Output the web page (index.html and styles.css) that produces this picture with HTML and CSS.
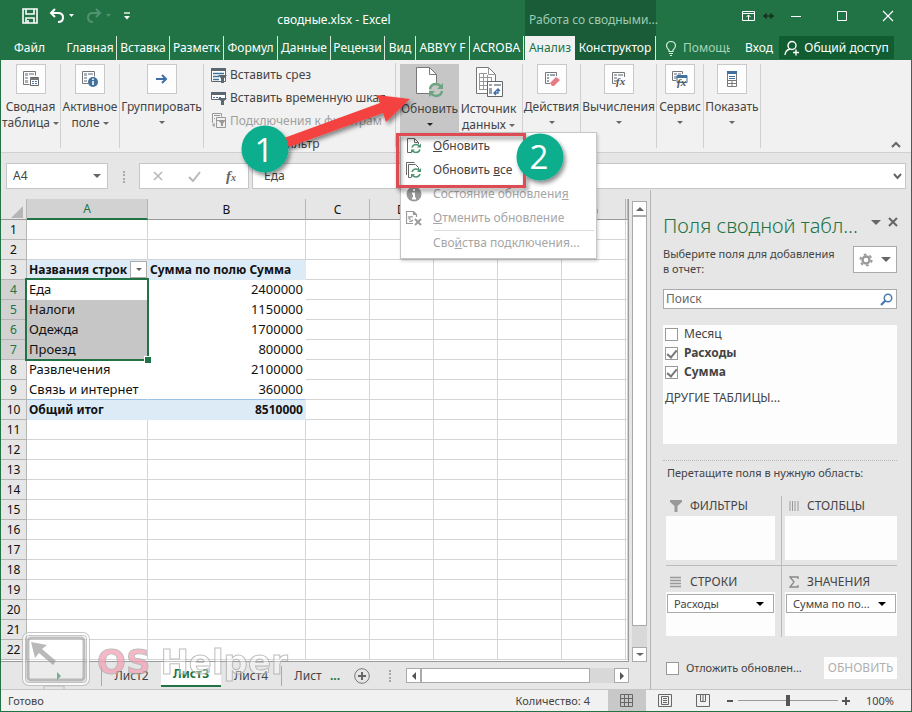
FILE: index.html
```html
<!DOCTYPE html>
<html lang="ru">
<head>
<meta charset="utf-8">
<title>сводные.xlsx - Excel</title>
<link rel="stylesheet" href="styles.css">
</head>
<body>
<div class="app">
  <header class="titlebar">
    <div class="quick">
      <button aria-label="Сохранить"><svg width="16" height="16" viewBox="0 0 16 16"><path d="M1 1h14v14H1zM4 1v5h8V1M4 15v-5h8v5M6 15v-3" fill="none" stroke="#fff" stroke-width="1.6"/></svg></button>
      <button aria-label="Отменить"><svg width="26" height="16" viewBox="0 0 26 16"><path d="M6 1L2 5l4 4M2 5h7q5 0 5 4.500t-5 4.500" fill="none" stroke="#fff" stroke-width="2"/><path d="M20 6h5l-2.500 3z" fill="#fff"/></svg></button>
      <button aria-label="Вернуть"><svg width="26" height="16" viewBox="0 0 26 16"><path d="M10 1l4 4-4 4M14 5H7q-5 0-5 4.500T7 14" fill="none" stroke="#4f9370" stroke-width="2"/><path d="M20 6h5l-2.500 3z" fill="#4f9370"/></svg></button>
      <button aria-label="Настройка панели"><svg width="8" height="10" viewBox="0 0 8 10"><path d="M1 2h6" stroke="#fff" stroke-width="1.300"/><path d="M1 5h6L4 8.500z" fill="#fff"/></svg></button>
    </div>
    <h1 class="doc">сводные.xlsx - Excel</h1>
    <div class="context">Работа со сводными...</div>
    <div class="window">
      <button aria-label="Параметры ленты"><svg width="32" height="12" viewBox="0 0 32 12"><path d="M.5 1.500h12v9H.5zM.5 3.500h12M6.500 10V5M4.500 7l2-2 2 2" fill="none" stroke="#fff"/><path d="M22 6h9M25 3.500L22 6l3 2.500M28 3.500L31 6l-3 2.500" fill="none" stroke="#16301f" stroke-width="1.500"/></svg></button>
      <button aria-label="Свернуть"><svg width="12" height="12"><path d="M1 6.500h10" stroke="#fff"/></svg></button>
      <button aria-label="Развернуть"><svg width="12" height="12"><path d="M1.500 1.500h9v9h-9z" fill="none" stroke="#fff"/></svg></button>
      <button aria-label="Закрыть"><svg width="12" height="12"><path d="M1 1l10 10M11 1L1 11" stroke="#fff" stroke-width="1.200"/></svg></button>
    </div>
  </header>

  <nav class="tabs">
    <div class="main-tabs">
      <button class="file">Файл</button>
      <button class="w53">Главная</button>
      <button class="w53">Вставка</button>
      <button class="w54">Разметк</button>
      <button class="w54">Формул</button>
      <button class="w53">Данные</button>
      <button class="w54">Рецензи</button>
      <button class="w31">Вид</button>
      <button class="w54">ABBYY F</button>
      <button class="w54">ACROBA</button>
    </div>
    <div class="context-tabs">
      <button class="active">Анализ</button>
      <button class="design">Конструктор</button>
    </div>
    <div class="right-tabs">
      <button class="help"><svg width="12" height="16" viewBox="0 0 12 16"><path d="M4 11.500V10Q1.500 8 1.500 5.500 2 1.500 6 1.500t4.500 4Q10.500 8 8 10v1.500zM4 13.500h4M5 15.500h2" fill="none" stroke="#d5f0dc" stroke-width="1.200"/></svg><span>Помощь</span></button>
      <button class="login">Вход</button>
      <button class="share"><svg width="16" height="16" viewBox="0 0 16 16"><circle cx="8" cy="5.500" r="4" fill="none" stroke="#fff" stroke-width="1.400"/><path d="M1 15q.5-5 5-6M12 9.500v6M9 12.500h6" fill="none" stroke="#fff" stroke-width="1.400"/></svg>Общий доступ</button>
    </div>
  </nav>

  <section class="ribbon">
    <div class="group g60"><button class="cmd"><span class="box"><svg width="18" height="18" viewBox="0 0 18 18"><path d="M1.500 14.500v-13h12v4M1.500 14.500h6" fill="none" stroke="#777"/><path d="M3 3h3v3H3zM7 3h5v2H7zM3 7h3v2H3zM3 10h3v3H3z" fill="#aab1ba"/><path d="M8.500 7.500h8v8h-8z" fill="#fff" stroke="#666"/><path d="M8 8h9v2H8z" fill="#777"/><path d="M10 11.500h2M13 11.500h2M10 13.500h2M13 13.500h2" stroke="#4a7ab0"/></svg></span><span>Сводная</span><span>таблица<i class="tri"></i></span></button></div>
    <div class="group g59"><button class="cmd"><span class="box"><svg width="18" height="18" viewBox="0 0 18 18"><path d="M1.500 13.500v-12h12v5M1.500 13.500h6" fill="none" stroke="#777"/><path d="M3 3h3v3H3zM7 3h5v2H7zM3 7h3v2H3zM3 10h3v2H3z" fill="#aab1ba"/><circle cx="12" cy="12" r="5" fill="#41719c"/><path d="M12 8.500v1.500M12 11v4" stroke="#fff" stroke-width="1.600"/></svg></span><span>Активное</span><span>поле<i class="tri"></i></span></button></div>
    <div class="group g84"><button class="cmd"><span class="box"><svg width="12" height="12" viewBox="0 0 12 12"><path d="M0 6h10M6 2l4 4-4 4" fill="none" stroke="#3d6ea8" stroke-width="2"/></svg></span><span>Группировать</span><i class="tri low"></i></button></div>
    <div class="group filter">
      <button class="line"><svg width="16" height="16" viewBox="0 0 16 16"><path d="M.5 1.500h14v13H.5z" fill="#fff" stroke="#5d6770"/><path d="M0 1h15v3H0z" fill="#5d6770"/><path d="M2 6.500h11M2 9.500h6M2 12.500h6" stroke="#41719c" stroke-width="1.300"/><path d="M7 8h9l-3 3.500V16h-3v-4.500z" fill="#5d6770"/></svg>Вставить срез</button>
      <button class="line"><svg width="16" height="16" viewBox="0 0 16 16"><path d="M.5 3.500h14v6H.5z" fill="#fff" stroke="#5d6770"/><path d="M0 2h15v3H0z" fill="#5d6770"/><path d="M2 7.500h9" stroke="#41719c" stroke-dasharray="2 1"/><path d="M7 8h9l-3 3v4h-3v-4z" fill="#5d6770"/></svg>Вставить временную шкал</button>
      <button class="line" disabled><svg width="16" height="16" viewBox="0 0 16 16"><path d="M1.500 10V.5h9v3M5.500 4.500h9v10h-9zM5.500 7.500h9M1 12h3M3 14v-4M3 2.500h6M3 5.500h1" fill="none" stroke="#999"/><path d="M8 8h6l-2 2.500V13h-2v-2.500z" fill="#999"/></svg>Подключения к фильтрам</button>
      <div class="caption">Фильтр</div>
    </div>
    <div class="group data">
      <div class="menu-host">
        <button class="big pressed"><svg width="28" height="32" viewBox="0 0 28 32"><path d="M.5 1.500h13l7 7v19H.5z" fill="#fff" stroke="#777"/><path d="M13.500 1.500v7h7" fill="none" stroke="#777"/><circle cx="20" cy="24" r="7" fill="#c6c6c6"/><path d="M14 23q1-5 6-5 3 0 5 2.500M26 25q-1 5-6 5-3 0-5-2.500" fill="none" stroke="#6ba581" stroke-width="2.400"/><path d="M27 17v6h-6zM13 31v-6h6z" fill="#6ba581"/></svg><span>Обновить</span><i class="tri low dark"></i></button>
        <div class="menu" role="menu">
          <button role="menuitem"><svg width="16" height="16" viewBox="0 0 16 16"><path d="M5 14.500H1.500V.5h7l4 4V6M8.500.5v4h4" fill="none" stroke="#666"/><path d="M6 9.500q1-3 4-3 2 0 4 2M14 11.500q-1 3-4 3-2 0-4-2" fill="none" stroke="#4c9570" stroke-width="1.500"/><path d="M15 5.500v4h-4zM5 15.500v-4h4z" fill="#4c9570"/></svg><span><u>О</u>бновить</span></button>
          <button role="menuitem"><svg width="16" height="16" viewBox="0 0 16 16"><path d="M.5 13V.5h8M5 15.500H2.500v-13h7l3 3V7" fill="none" stroke="#666"/><path d="M6 10q1-3 4-3 2 0 4 2M14 12q-1 3-4 3-2 0-4-2" fill="none" stroke="#4c9570" stroke-width="1.500"/><path d="M15 6v4h-4zM5 16v-4h4z" fill="#4c9570"/></svg><span>Обновить <u>в</u>се</span></button>
          <button role="menuitem" disabled><svg width="16" height="16" viewBox="0 0 16 16"><circle cx="8" cy="8" r="7.500" fill="#999"/><path d="M8 3v2M6 7.500h2V12M6 12.500h4" stroke="#fff" stroke-width="2" fill="none"/></svg><span>Состояние обновлени<u>я</u></span></button>
          <button role="menuitem" disabled><svg width="16" height="16" viewBox="0 0 16 16"><path d="M7 13.500H.5V1.500h7l3 3V7M7.500 1.500v3h3M3 8q1-2 4-1M3 6v3h2M3 11q2 1 4-1" fill="none" stroke="#999" stroke-width="1.200"/><path d="M9 9l6 6M15 9l-6 6" stroke="#999" stroke-width="1.800"/></svg><span><u>О</u>тменить обновление</span></button>
          <hr>
          <button role="menuitem" disabled><i class="noicon"></i><span>Сво<u>й</u>ства подключения...</span></button>
        </div>
      </div>
      <button class="big"><svg width="28" height="32" viewBox="0 0 28 32"><path d="M1.500 1.500h12l7 7v19h-19z" fill="#fff" stroke="#777"/><path d="M13.500 1.500v7h7M4 7.500h8M4 11.500h13M4 15.500h13M4 19.500h9M4 23.500h8M4.500 7v17M8.500 7v17M12.500 9v10M16.500 11v5" fill="none" stroke="#999"/><path d="M12.500 15.500h15v15h-15z" fill="#fff" stroke="#666"/><path d="M14 18h3v2h-3zM19 18h7v2h-7zM14 22h3v6h-3z" fill="#9aa3ad"/><path d="M19 27h4v-4M21 25l-2 2 2 2M21 25l2-2 2 2" fill="none" stroke="#3d6ea8" stroke-width="1.400"/></svg><span>Источник</span><span>данных<i class="tri"></i></span></button>
    </div>
    <div class="group g58"><button class="cmd"><span class="box"><svg width="16" height="18" viewBox="0 0 16 18"><path d="M12.500 6V2.500H1.500v11H6" fill="none" stroke="#777"/><path d="M3 4h2v2H3zM6 4h5v2H6zM3 7h2v2H3zM3 10h2v2H3z" fill="#9aa3ad"/><path d="M6 13l6-6 4 3-6 6H8z" fill="#e57b85"/></svg></span><span>Действия</span><i class="tri low"></i></button></div>
    <div class="group g76"><button class="cmd"><span class="box"><svg width="16" height="18" viewBox="0 0 16 18"><path d="M13.500 7V2.500H1.500v11H5" fill="none" stroke="#777"/><path d="M3 4h3v2H3zM7 4h5v2H7zM3 7h3v2H3zM3 10h3v2H3z" fill="#aab1ba"/><text x="5" y="15" class="fx">fx</text></svg></span><span>Вычисления</span><i class="tri low"></i></button></div>
    <div class="group g47"><button class="cmd"><span class="box"><svg width="18" height="18" viewBox="0 0 18 18"><path d="M11.500 4V1.500H1.500v9H5" fill="none" stroke="#777"/><path d="M3 3h3v2H3zM7 3h3v2H7zM3 6h3v3H3z" fill="#aab1ba"/><path d="M6 5.500h10v7H6z" fill="#fff" stroke="#41719c"/><path d="M6 5h10v3H6z" fill="#41719c"/><text x="6" y="16" class="fx">fx</text></svg></span><span>Сервис</span><i class="tri low"></i></button></div>
    <div class="group g57"><button class="cmd"><span class="box"><svg width="10" height="16" viewBox="0 0 10 16"><path d="M.5 1.500h9v14h-9z" fill="#fff" stroke="#777"/><path d="M0 0h10v3H0z" fill="#41719c"/><path d="M2 5.500h6M2 7.500h6" stroke="#41719c"/><path d="M0 9.500h10M0 12.500h10M5 9v6" stroke="#777"/></svg></span><span>Показать</span><i class="tri low"></i></button></div>
    <button class="collapse" aria-label="Свернуть ленту"><svg width="10" height="7"><path d="M1 6l4-4 4 4" fill="none" stroke="#666" stroke-width="2"/></svg></button>
  </section>

  <section class="formula">
    <div class="namebox"><input aria-label="Имя" value="A4"><i class="tri"></i></div>
    <span class="grip"></span>
    <div class="fbtns">
      <button aria-label="Отмена"><svg width="10" height="10"><path d="M1 1l8 8M9 1L1 9" stroke="#b8b8b8" stroke-width="1.600"/></svg></button>
      <button aria-label="Ввод"><svg width="13" height="11"><path d="M1 6l4 4 7-9" fill="none" stroke="#b8b8b8" stroke-width="2"/></svg></button>
      <button class="fxb" aria-label="Вставить функцию">f<small>x</small></button>
    </div>
    <div class="fvalue"><input aria-label="Строка формул" value="Еда"><svg width="9" height="7"><path d="M1 1l3.500 4L8 1" fill="none" stroke="#666" stroke-width="2"/></svg></div>
  </section>

  <main class="work">
    <section class="book">
      <div class="sheet">
        <div class="gridwrap">
        <table class="cells">
          <colgroup><col class="c0"><col class="ca"><col class="cb"><col class="cc"><col class="cc"><col class="cc"><col class="cc"><col class="cc"><col></colgroup>
          <thead><tr><th class="corner"><svg width="12" height="12"><path d="M12 0v12H0z" fill="#b5b5b5"/></svg></th><th class="sel">A</th><th>B</th><th>C</th><th>D</th><th>E</th><th>F</th><th>G</th><th></th></tr></thead>
          <tbody>
          <tr><th>1</th><td></td><td></td><td></td><td></td><td></td><td></td><td></td><td></td></tr>
          <tr><th>2</th><td></td><td></td><td></td><td></td><td></td><td></td><td></td><td></td></tr>
          <tr class="band"><th>3</th><td><div class="fieldhead">Названия строк<button aria-label="Фильтр строк"><i class="tri"></i></button></div></td><td class="left">Сумма по полю Сумма</td><td></td><td></td><td></td><td></td><td></td><td></td></tr>
          <tr class="pv picked"><th>4</th><td class="first"><div class="range"></div>Еда</td><td>2400000</td><td></td><td></td><td></td><td></td><td></td><td></td></tr>
          <tr class="pv picked"><th>5</th><td>Налоги</td><td>1150000</td><td></td><td></td><td></td><td></td><td></td><td></td></tr>
          <tr class="pv picked"><th>6</th><td>Одежда</td><td>1700000</td><td></td><td></td><td></td><td></td><td></td><td></td></tr>
          <tr class="pv picked"><th>7</th><td>Проезд</td><td>800000</td><td></td><td></td><td></td><td></td><td></td><td></td></tr>
          <tr class="pv"><th>8</th><td>Развлечения</td><td>2100000</td><td></td><td></td><td></td><td></td><td></td><td></td></tr>
          <tr class="pv last"><th>9</th><td>Связь и интернет</td><td>360000</td><td></td><td></td><td></td><td></td><td></td><td></td></tr>
          <tr class="band"><th>10</th><td>Общий итог</td><td>8510000</td><td></td><td></td><td></td><td></td><td></td><td></td></tr>
          <tr><th>11</th><td></td><td></td><td></td><td></td><td></td><td></td><td></td><td></td></tr>
          <tr><th>12</th><td></td><td></td><td></td><td></td><td></td><td></td><td></td><td></td></tr>
          <tr><th>13</th><td></td><td></td><td></td><td></td><td></td><td></td><td></td><td></td></tr>
          <tr><th>14</th><td></td><td></td><td></td><td></td><td></td><td></td><td></td><td></td></tr>
          <tr><th>15</th><td></td><td></td><td></td><td></td><td></td><td></td><td></td><td></td></tr>
          <tr><th>16</th><td></td><td></td><td></td><td></td><td></td><td></td><td></td><td></td></tr>
          <tr><th>17</th><td></td><td></td><td></td><td></td><td></td><td></td><td></td><td></td></tr>
          <tr><th>18</th><td></td><td></td><td></td><td></td><td></td><td></td><td></td><td></td></tr>
          <tr><th>19</th><td></td><td></td><td></td><td></td><td></td><td></td><td></td><td></td></tr>
          <tr><th>20</th><td></td><td></td><td></td><td></td><td></td><td></td><td></td><td></td></tr>
          <tr><th>21</th><td></td><td></td><td></td><td></td><td></td><td></td><td></td><td></td></tr>
          <tr><th>22</th><td></td><td></td><td></td><td></td><td></td><td></td><td></td><td></td></tr>
          </tbody>
        </table>
        </div>
        <div class="vscroll"><button aria-label="Вверх"><i class="tri up"></i></button><span class="vthumb"></span><span class="vtrack"></span><button aria-label="Вниз"><i class="tri"></i></button></div>
      </div>
      <div class="sheettabs">
        <span class="navs"><svg width="5" height="8"><path d="M0 0v8l4-4z" fill="#4c9570"/></svg></span>
        <button class="st">Лист2</button>
        <button class="st on">Лист3</button>
        <button class="st">Лист4</button>
        <button class="st cut">Лист</button>
        <b class="more">...</b>
        <button class="add" aria-label="Новый лист"><svg width="16" height="16"><circle cx="8" cy="8" r="7.300" fill="none" stroke="#777"/><path d="M8 4v8M4 8h8" stroke="#666" stroke-width="2"/></svg></button>
        <span class="grip"></span>
        <div class="hscroll"><button aria-label="Влево"><i class="tri lt"></i></button><span class="hthumb"></span><span class="htrack"></span><button aria-label="Вправо"><i class="tri rt"></i></button></div>
      </div>
      <div class="mark" aria-hidden="true">
        <svg width="68" height="60" viewBox="0 0 68 60"><g fill="none"><rect x="2" y="2" width="64" height="50" rx="5" fill="#fff" fill-opacity=".3" stroke="#b5b5b5" stroke-width="4"/><rect x="2" y="2" width="64" height="50" rx="5" stroke="#fff" stroke-width="2"/><rect x="6" y="6" width="56" height="42" rx="3" stroke="#aaa" stroke-width="3"/><path d="M22 57v-3h20v3" stroke="#aaa"/></g><path d="M9 10l16 3-5 4 14 12-3 4-14-12-4 5z" fill="#a2a2a2"/></svg>
        <span class="os">OS</span><span class="helper">Helper</span>
      </div>
    </section>

    <aside class="pane">
      <div class="panehead"><h2>Поля сводной табл...</h2><i class="tri large"></i><button aria-label="Закрыть область"><svg width="12" height="12"><path d="M2 2l8 8M10 2l-8 8" stroke="#666" stroke-width="2"/></svg></button></div>
      <div class="hint"><p>Выберите поля для добавления в отчет:</p><button class="gear" aria-label="Сервис"><svg width="14" height="14" viewBox="0 0 14 14"><circle cx="7" cy="7" r="3.500" fill="none" stroke="#999" stroke-width="2.400"/><circle cx="7" cy="7" r="5.600" fill="none" stroke="#999" stroke-width="2" stroke-dasharray="2.600 3.260"/></svg><i class="tri large"></i></button></div>
      <div class="search"><input type="text" placeholder="Поиск" aria-label="Поиск"><svg width="13" height="13" viewBox="0 0 13 13"><circle cx="8" cy="5" r="3.700" fill="none" stroke="#4a7ab0" stroke-width="1.500"/><path d="M5.500 7.500L1 12" stroke="#4a7ab0" stroke-width="2.300"/></svg></div>
      <div class="fields">
        <label><input type="checkbox">Месяц</label>
        <label class="bold"><input type="checkbox" checked>Расходы</label>
        <label class="bold"><input type="checkbox" checked>Сумма</label>
        <a href="#">ДРУГИЕ ТАБЛИЦЫ...</a>
      </div>
      <p class="drag">Перетащите поля в нужную область:</p>
      <div class="areas">
        <div class="area"><h3><svg width="12" height="12"><path d="M0 0h12v2L7.500 6v6h-3V6L0 2z" fill="#999"/></svg>ФИЛЬТРЫ</h3><div class="drop"></div></div>
        <div class="area r"><h3><svg width="10" height="12"><path d="M1 1v10M3.500 1v10M6 1v10M9 1v10" stroke="#999"/></svg>СТОЛБЦЫ</h3><div class="drop"></div></div>
        <div class="area b"><h3><svg width="12" height="12"><path d="M0 1.500h11M0 4.500h11M0 7.500h11M0 10.500h11" stroke="#999" stroke-width="1.500"/></svg>СТРОКИ</h3><div class="drop"><div class="chip"><select aria-label="Строки"><option>Расходы</option></select><i class="tri"></i></div></div></div>
        <div class="area r b"><h3><svg width="10" height="12"><path d="M9 3V1H1l4 5-4 5h8V9" fill="none" stroke="#888" stroke-width="1.300"/></svg>ЗНАЧЕНИЯ</h3><div class="drop"><div class="chip"><select aria-label="Значения"><option>Сумма по по...</option></select><i class="tri"></i></div></div></div>
      </div>
      <div class="defer"><label><input type="checkbox">Отложить обновлен...</label><button disabled>ОБНОВИТЬ</button></div>
    </aside>
  </main>

  <footer class="status">
    <span class="ready">Готово</span>
    <span class="count">Количество: 4</span>
    <button class="view on" aria-label="Обычный"><svg width="13" height="13"><path d="M.5.5h12v12H.5zM.5 4.500h12M.5 8.500h12M4.500.5v12M8.500.5v12" fill="none" stroke="#666"/></svg></button>
    <button class="view" aria-label="Разметка страницы"><svg width="14" height="13"><path d="M.5.5h13v12H.5zM3.500 2.500h7v8h-7zM5 4.500h4M5 6.500h4M5 8.500h4" fill="none" stroke="#666"/></svg></button>
    <button class="view" aria-label="Страничный"><svg width="14" height="13"><path d="M.5.5h13v12H.5zM4.500.5v7h5v-7M7 .5v7" fill="none" stroke="#666"/></svg></button>
    <button class="zoomb" aria-label="Уменьшить"><svg width="8" height="8"><path d="M1 4h6" stroke="#555" stroke-width="2"/></svg></button>
    <input class="zoom" type="range" min="0" max="100" value="50" aria-label="Масштаб">
    <button class="zoomb" aria-label="Увеличить"><svg width="8" height="8"><path d="M0 4h8M4 0v8" stroke="#555" stroke-width="2"/></svg></button>
    <span class="pct">100%</span>
  </footer>

  <svg class="notes" width="600" height="210" viewBox="0 0 600 210" aria-hidden="true">
    <defs><filter id="sh" x="-20%" y="-20%" width="150%" height="150%"><feDropShadow dx="2" dy="3" stdDeviation="2" flood-opacity=".45"/></filter></defs>
    <g filter="url(#sh)">
      <path d="M284 138L380 103 377 95l33 4-24 23-3-9-94 34z" fill="#f4433f"/>
      <rect x="397.500" y="134.500" width="127" height="52" fill="none" stroke="#dd4b53" stroke-width="3"/>
      <circle cx="265" cy="149" r="23.500" fill="#0fae8e"/>
      <circle cx="540" cy="157" r="23.500" fill="#0fae8e"/>
    </g>
    <text x="264" y="162">1</text><text x="539" y="169">2</text>
  </svg>
</div>
</body>
</html>
```
FILE: styles.css
```css
* { box-sizing: border-box; }
body { margin: 0; font: 12px/16px "Noto Sans", "Open Sans", sans-serif; color: #444; background: #e6e6e6; }
button, input, select { font: inherit; color: inherit; margin: 0; padding: 0; border: 0; background: none; border-radius: 0; }
button { white-space: nowrap; }
h1, h2, h3, p { margin: 0; font: inherit; }
svg { display: block; flex: none; }

.app { position: relative; display: flex; flex-direction: column; min-height: 100vh; border: solid #217346; border-width: 0 1px 1px; overflow: hidden; }

.tri { display: inline-block; flex: none; border: solid transparent; border-width: 3px 3px 0; border-top-color: #666; margin-left: 3px; vertical-align: middle; }
.tri.large { border-width: 5px 5px 0; margin: 0; }
.tri.low { margin: 6px 0 0; }
.tri.dark { border-top-color: #222; }
.tri.up { border-width: 0 4px 4px; border-color: transparent transparent #666; margin: 0; }
.tri.lt { border-width: 4px 4px 4px 0; border-color: transparent #555; margin: 0; }
.tri.rt { border-width: 4px 0 4px 4px; border-color: transparent #555; margin: 0; }

.titlebar { display: flex; height: 36px; background: #217346; color: #fff; }
.quick { display: flex; align-items: center; gap: 11px; width: 140px; padding: 0 0 4px 21px; }
.doc { flex: 1; text-align: center; padding: 12px 0 0 2px; }
.context { width: 131px; background: #1a5c38; color: #9fcbb0; padding: 12px 0 0 4px; white-space: nowrap; }
.window { display: flex; align-items: center; justify-content: flex-end; gap: 34px; width: 255px; padding: 0 17px 4px 0; }
.window button:first-child { margin-right: -18px; }

.tabs { display: flex; height: 24px; background: #217346; color: #fff; }
.main-tabs { display: flex; flex: 1; min-width: 0; }
.tabs button { overflow: hidden; }
.main-tabs button { flex: none; border-right: 1px solid #d9e8df; text-align: center; }
.main-tabs .file { width: 63px; border: 0; padding-right: 6px; }
.main-tabs .w53 { width: 53px; }
.main-tabs .w54 { width: 54px; }
.main-tabs .w31 { width: 31px; }
.context-tabs { display: flex; width: 131px; background: #1a5c38; border-right: 1px solid #d9e8df; }
.context-tabs .active { width: 50px; background: #f1f1f1; color: #217346; }
.context-tabs .design { flex: 1; }
.right-tabs { display: flex; width: 255px; }
.help { display: flex; align-items: center; gap: 6px; width: 74px; margin-left: 9px; color: #a9d3b8; }
.help span { width: 47px; overflow: hidden; }
.login { width: 40px; }
.share { display: flex; align-items: center; justify-content: center; gap: 4px; width: 115px; height: 23px; background: #115c30; }

.ribbon { display: flex; height: 93px; padding-top: 4px; background: #f1f1f1; border-bottom: 1px solid #d0d0d0; }
.group { height: 84px; border-right: 1px solid #d0d0d0; }
.g60 { width: 60px; } .g59 { width: 59px; } .g84 { width: 84px; } .g58 { width: 58px; }
.g76 { width: 76px; } .g47 { width: 47px; } .g57 { width: 57px; }
.cmd { display: flex; flex-direction: column; align-items: center; width: 100%; }
.box { display: grid; place-items: center; width: 30px; height: 30px; margin-bottom: 5px; background: #fdfdfd; border: 1px solid #c9c9c9; }
.fx { font: italic bold 11px "Liberation Serif", serif; fill: #555; }
.filter { width: 192px; padding-left: 7px; margin-top: -1px; padding-top: 0; }
.line { display: flex; align-items: center; gap: 3px; width: 176px; height: 23px; overflow: hidden; }
.line:disabled { color: #a0a0a0; }
.caption { text-align: center; padding: 4px 10px 0 0; }
.data { display: flex; width: 127px; padding-left: 4px; }
.menu-host { position: relative; width: 59px; }
.big { display: flex; flex-direction: column; align-items: center; width: 59px; height: 69px; padding-top: 2px; }
.big svg { margin-bottom: 3px; }
.big.pressed { width: 59px; background: #c6c6c6; }
.menu { position: absolute; z-index: 2; left: 0; top: 68px; width: 197px; padding: 1px 0 3px; background: #fff; border: 1px solid #c6c6c6; box-shadow: 1px 2px 3px #0003; }
.menu button { display: flex; align-items: center; gap: 11px; width: 100%; height: 24px; padding-left: 5px; }
.menu button:disabled { color: #a6a6a6; }
.menu hr { margin: 0 2px 0 33px; border: 0; border-top: 1px solid #dcdcdc; }
.noicon { width: 16px; }
.collapse { margin: auto 10px 4px auto; }

.formula { display: flex; height: 37px; padding: 10px 5px 0; }
.formula > * { height: 26px; background: #fff; border: 1px solid #c6c6c6; }
.namebox { display: flex; align-items: center; width: 102px; padding: 0 6px; }
.namebox input { flex: 1; min-width: 0; }
.namebox .tri { border-width: 4px 4px 0; }
.formula .grip { background: none; border: 0; margin: 0 14px 0 15px; display: flex; }
.grip { width: 2px; height: 12px; align-self: center; border-left: 2px dotted #aaa; }
.formula .grip::before { content: ""; height: 12px; margin: auto; border-left: 2px dotted #aaa; }
.fbtns { display: flex; align-items: center; justify-content: space-between; width: 110px; padding: 0 12px 0 13px; }
.fxb { font: italic bold 15px "Liberation Serif", serif; color: #666; }
.fxb small { font-size: 10px; }
.fvalue { display: flex; align-items: center; flex: 1; margin-left: 3px; padding: 0 3px 0 11px; }
.fvalue input { flex: 1; }

.work { display: flex; flex: 1; }
.book { position: relative; flex: 1; min-width: 0; display: flex; flex-direction: column; padding-top: 9px; }
.sheet { display: flex; flex: 1; }
.gridwrap { flex: 1; min-width: 0; background: #fff; border-right: 1px solid #999; border-bottom: 1px solid #999; }
.cells { width: 100%; table-layout: fixed; border-collapse: separate; border-spacing: 0; font-size: 13px; line-height: 19px; color: #111; }
.c0 { width: 26px; } .ca { width: 121px; } .cb { width: 158px; } .cc { width: 64px; }
.cells th, .cells td { height: 20px; padding: 0 2px; border: solid #d4d4d4; border-width: 0 1px 1px 0; white-space: nowrap; }
.cells th { background: #e6e6e6; font-weight: 400; font-size: 12px; text-align: center; border-color: #b5b5b5; }
.cells thead th { border-bottom-color: #999; }
.cells thead .sel { background: #d2d2d2; color: #217346; border-bottom: 2px solid #217346; }
.corner svg { margin: 5px 0 0 8px; }
.cells td:nth-child(3) { text-align: right; }
.cells td.left { text-align: left; }
.band td:nth-child(-n+3) { background: #ddebf7; border-color: #ddebf7; font-weight: 700; font-size: 12px; }
.pv td:nth-child(-n+3) { border-color: transparent; }
.pv.last td:nth-child(-n+3) { border-bottom-color: #9bc2e6; }
.picked th { background: #d2d2d2; color: #217346; border-right-color: #217346; }
.picked td:nth-child(2) { background: #c6c6c6; }
.picked td.first { position: relative; background: #fff; }
.range { position: absolute; left: -2px; top: -2px; width: 124px; height: 83px; border: 2px solid #217346; }
.range::after { content: ""; position: absolute; right: -4px; bottom: -4px; width: 6px; height: 6px; background: #217346; border: solid #fff; border-width: 1px 0 0 1px; }
.fieldhead { display: flex; justify-content: space-between; align-items: center; height: 19px; }
.fieldhead button { width: 17px; height: 17px; margin-right: -2px; background: #fff; border: 1px solid #aaa; display: grid; place-items: center; }
.fieldhead .tri { margin: 0; }
.vscroll { display: flex; flex-direction: column; width: 15px; margin: 2px 3px 0 3px; background: #d8d8d8; }
.vscroll button { display: grid; place-items: center; height: 15px; background: #fff; border: 1px solid #aaa; }
.vscroll .tri { margin: 0; border-left-width: 4px; border-right-width: 4px; }
.vthumb { flex: 1; background: #fff; border: 1px solid #aaa; }
.vtrack { height: 21px; }
.sheettabs { display: flex; align-items: center; height: 28px; border-bottom: 1px solid #c6c6c6; }
.navs { width: 100px; padding-left: 56px; }
.st { width: 60px; height: 20px; font-size: 12px; border-left: 1px solid #aaa; overflow: hidden; }
.st.on { height: 25px; align-self: flex-start; background: #fff; color: #217346; font-weight: 700; border: 0; border-bottom: 2px solid #217346; }
.st.on + .st { border: 0; }
.st.cut { width: 42px; padding-left: 11px; }
.more { color: #217346; margin: 0 14px 0 7px; }
.add { margin-right: 19px; }
.hscroll { display: flex; flex: 1; height: 15px; margin: 0 21px 0 15px; background: #d8d8d8; }
.hscroll button { display: grid; place-items: center; width: 15px; background: #fff; border: 1px solid #aaa; }
.hthumb { flex: 1; background: #fff; border: 1px solid #aaa; }
.htrack { width: 24px; }
.mark { position: absolute; z-index: 3; left: 21px; bottom: -2px; display: flex; align-items: center; opacity: .75; font: 700 34px/40px "DejaVu Sans", sans-serif; pointer-events: none; }
.mark span { color: #fff8; -webkit-text-stroke: 1px #aaa; }
.mark .os { margin: 0 10px 0 7px; color: #f4a0b4; }

.pane { display: flex; flex-direction: column; width: 261px; padding: 24px 14px 0 12px; border-left: 1px solid #b5b5b5; border-bottom: 1px solid #c6c6c6; }
.panehead { display: flex; align-items: center; height: 24px; gap: 6px; }
.panehead h2 { flex: 1; font-size: 20px; line-height: 24px; color: #217346; white-space: nowrap; font-weight: 300; }
.panehead button, .panehead .tri { margin-bottom: 8px; }
.panehead button { margin-right: -2px; }
.hint { display: flex; justify-content: space-between; align-items: flex-start; margin-top: 8px; font-size: 11px; line-height: 15px; height: 43px; }
.hint p { width: 174px; }
.gear { display: flex; align-items: center; justify-content: center; gap: 8px; width: 44px; height: 27px; background: #fff; border: 1px solid #aaa; }
.search { display: flex; align-items: center; height: 20px; padding: 0 3px 0 2px; background: #fff; border: 1px solid #aaa; }
.search input { flex: 1; min-width: 0; }
.search input::placeholder { color: #666; opacity: 1; }
.fields { display: flex; flex-direction: column; gap: 1px; height: 119px; margin-top: 16px; padding: 0 2px; background: #fdfdfd; }
.fields label { display: flex; align-items: center; gap: 6px; height: 18px; }
.bold { font-weight: 700; }
.fields a { margin-top: 8px; color: #444; text-decoration: none; }
.pane input[type=checkbox] { appearance: none; width: 13px; height: 13px; background: #fff; border: 1px solid #999; }
.pane input[type=checkbox]:checked { display: grid; place-items: center; }
.pane input[type=checkbox]:checked::before { content: ""; width: 4px; height: 8px; border: solid #777; border-width: 0 2px 2px 0; transform: rotate(40deg); margin-bottom: 2px; }
.drag { margin-top: 16px; padding: 4px 0 0 4px; border-top: 1px dotted #bbb; font-size: 11px; }
.areas { display: grid; grid-template-columns: 116px 1fr; margin: 15px 0 0 3px; }
.area { padding-right: 6px; height: 70px; border-right: 1px solid #bbb; border-bottom: 1px solid #bbb; }
.area.r { padding: 0 0 0 3px; border-right: 0; }
.area.b { border-bottom: 0; height: 71px; padding-top: 6px; }
.area h3 { display: flex; align-items: center; gap: 8px; height: 20px; padding-left: 4px; }
.drop { height: 44px; background: #fdfdfd; padding: 1px; }
.area.b .drop { padding-top: 2px; }
.chip { position: relative; display: flex; align-items: center; height: 19px; background: #fff; border: 1px solid #aaa; }
.chip select { appearance: none; width: 100%; padding-left: 6px; font-size: 11px; }
.chip .tri { position: absolute; right: 9px; border-width: 4px 4px 0; border-top-color: #000; pointer-events: none; }
.defer { display: flex; align-items: center; justify-content: space-between; margin: 20px 0 10px 3px; font-size: 11px; }
.defer label { display: flex; align-items: center; gap: 7px; }
.defer button { width: 73px; height: 22px; font-size: 12px; background: #fdfdfd; color: #b0b0b0; }

.status { display: flex; align-items: center; height: 21px; background: #f1f1f1; font-size: 11px; }
.ready { padding-left: 7px; }
.count { margin: 0 18px 0 auto; }
.view { display: grid; place-items: center; width: 38px; height: 21px; }
.view.on { background: #c8c8c8; }
.zoomb { margin: 0 4px; }
.zoom { appearance: none; width: 100px; height: 16px; background: linear-gradient(#999, #999) center / 100% 1px no-repeat; }
.zoom::-webkit-slider-thumb { appearance: none; width: 4px; height: 11px; background: #555; }
.pct { margin: 0 17px 0 12px; }

.notes { position: absolute; z-index: 4; left: -1px; top: 0; pointer-events: none; }
.notes text { font: 33px "Open Sans", sans-serif; fill: #fff; text-anchor: middle; }
```
